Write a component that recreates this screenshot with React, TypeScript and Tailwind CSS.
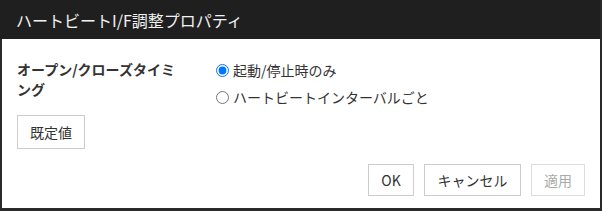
import React from "react";

export default function App() {
  const font = { fontFamily: '"Noto Sans CJK JP", "Noto Sans", sans-serif' };
  return (
    <div className="w-[602px] h-[211px] bg-[#2a2a2a] overflow-hidden" style={font}>
      <div className="w-[600px] h-[39px] bg-[#1f1f1f] flex items-center pl-[16px] text-[16px] text-[#f2f2f2]">
        ハートビートI/F調整プロパティ
      </div>
      <div className="ml-[2px] w-[598px] h-[169px] bg-white flex flex-col pt-[20px] pl-[15px] pr-[15px]">
        <div className="flex items-start">
          <div className="w-[199px] pr-[30px] text-[14px] leading-[20px] font-bold text-[#333]">
            オープン/クローズタイミング
          </div>
          <div className="flex flex-col gap-[5px]">
            <label className="h-[22px] flex items-center text-[14px] text-[#333]">
              <input type="radio" name="t" defaultChecked className="m-0 w-[13px] h-[13px] mr-[4px]" />
              起動/停止時のみ
            </label>
            <label className="h-[22px] flex items-center text-[14px] text-[#333]">
              <input type="radio" name="t" className="m-0 w-[13px] h-[13px] mr-[4px]" />
              ハートビートインターバルごと
            </label>
          </div>
        </div>
        <div className="mt-[7px]">
          <button className="w-[68px] h-[34px] border border-[#ccc] bg-white text-[14px] text-[#333]">既定値</button>
        </div>
        <div className="mt-[15px] flex justify-end gap-[10px]">
          <button className="w-[46px] h-[32px] border border-[#ccc] bg-white text-[14px] text-[#333]">OK</button>
          <button className="w-[97px] h-[32px] border border-[#ccc] bg-white text-[14px] text-[#333]">キャンセル</button>
          <button className="w-[54px] h-[32px] border border-[#ddd] bg-white text-[14px] text-[#aaa]">適用</button>
        </div>
      </div>
    </div>
  );
}
